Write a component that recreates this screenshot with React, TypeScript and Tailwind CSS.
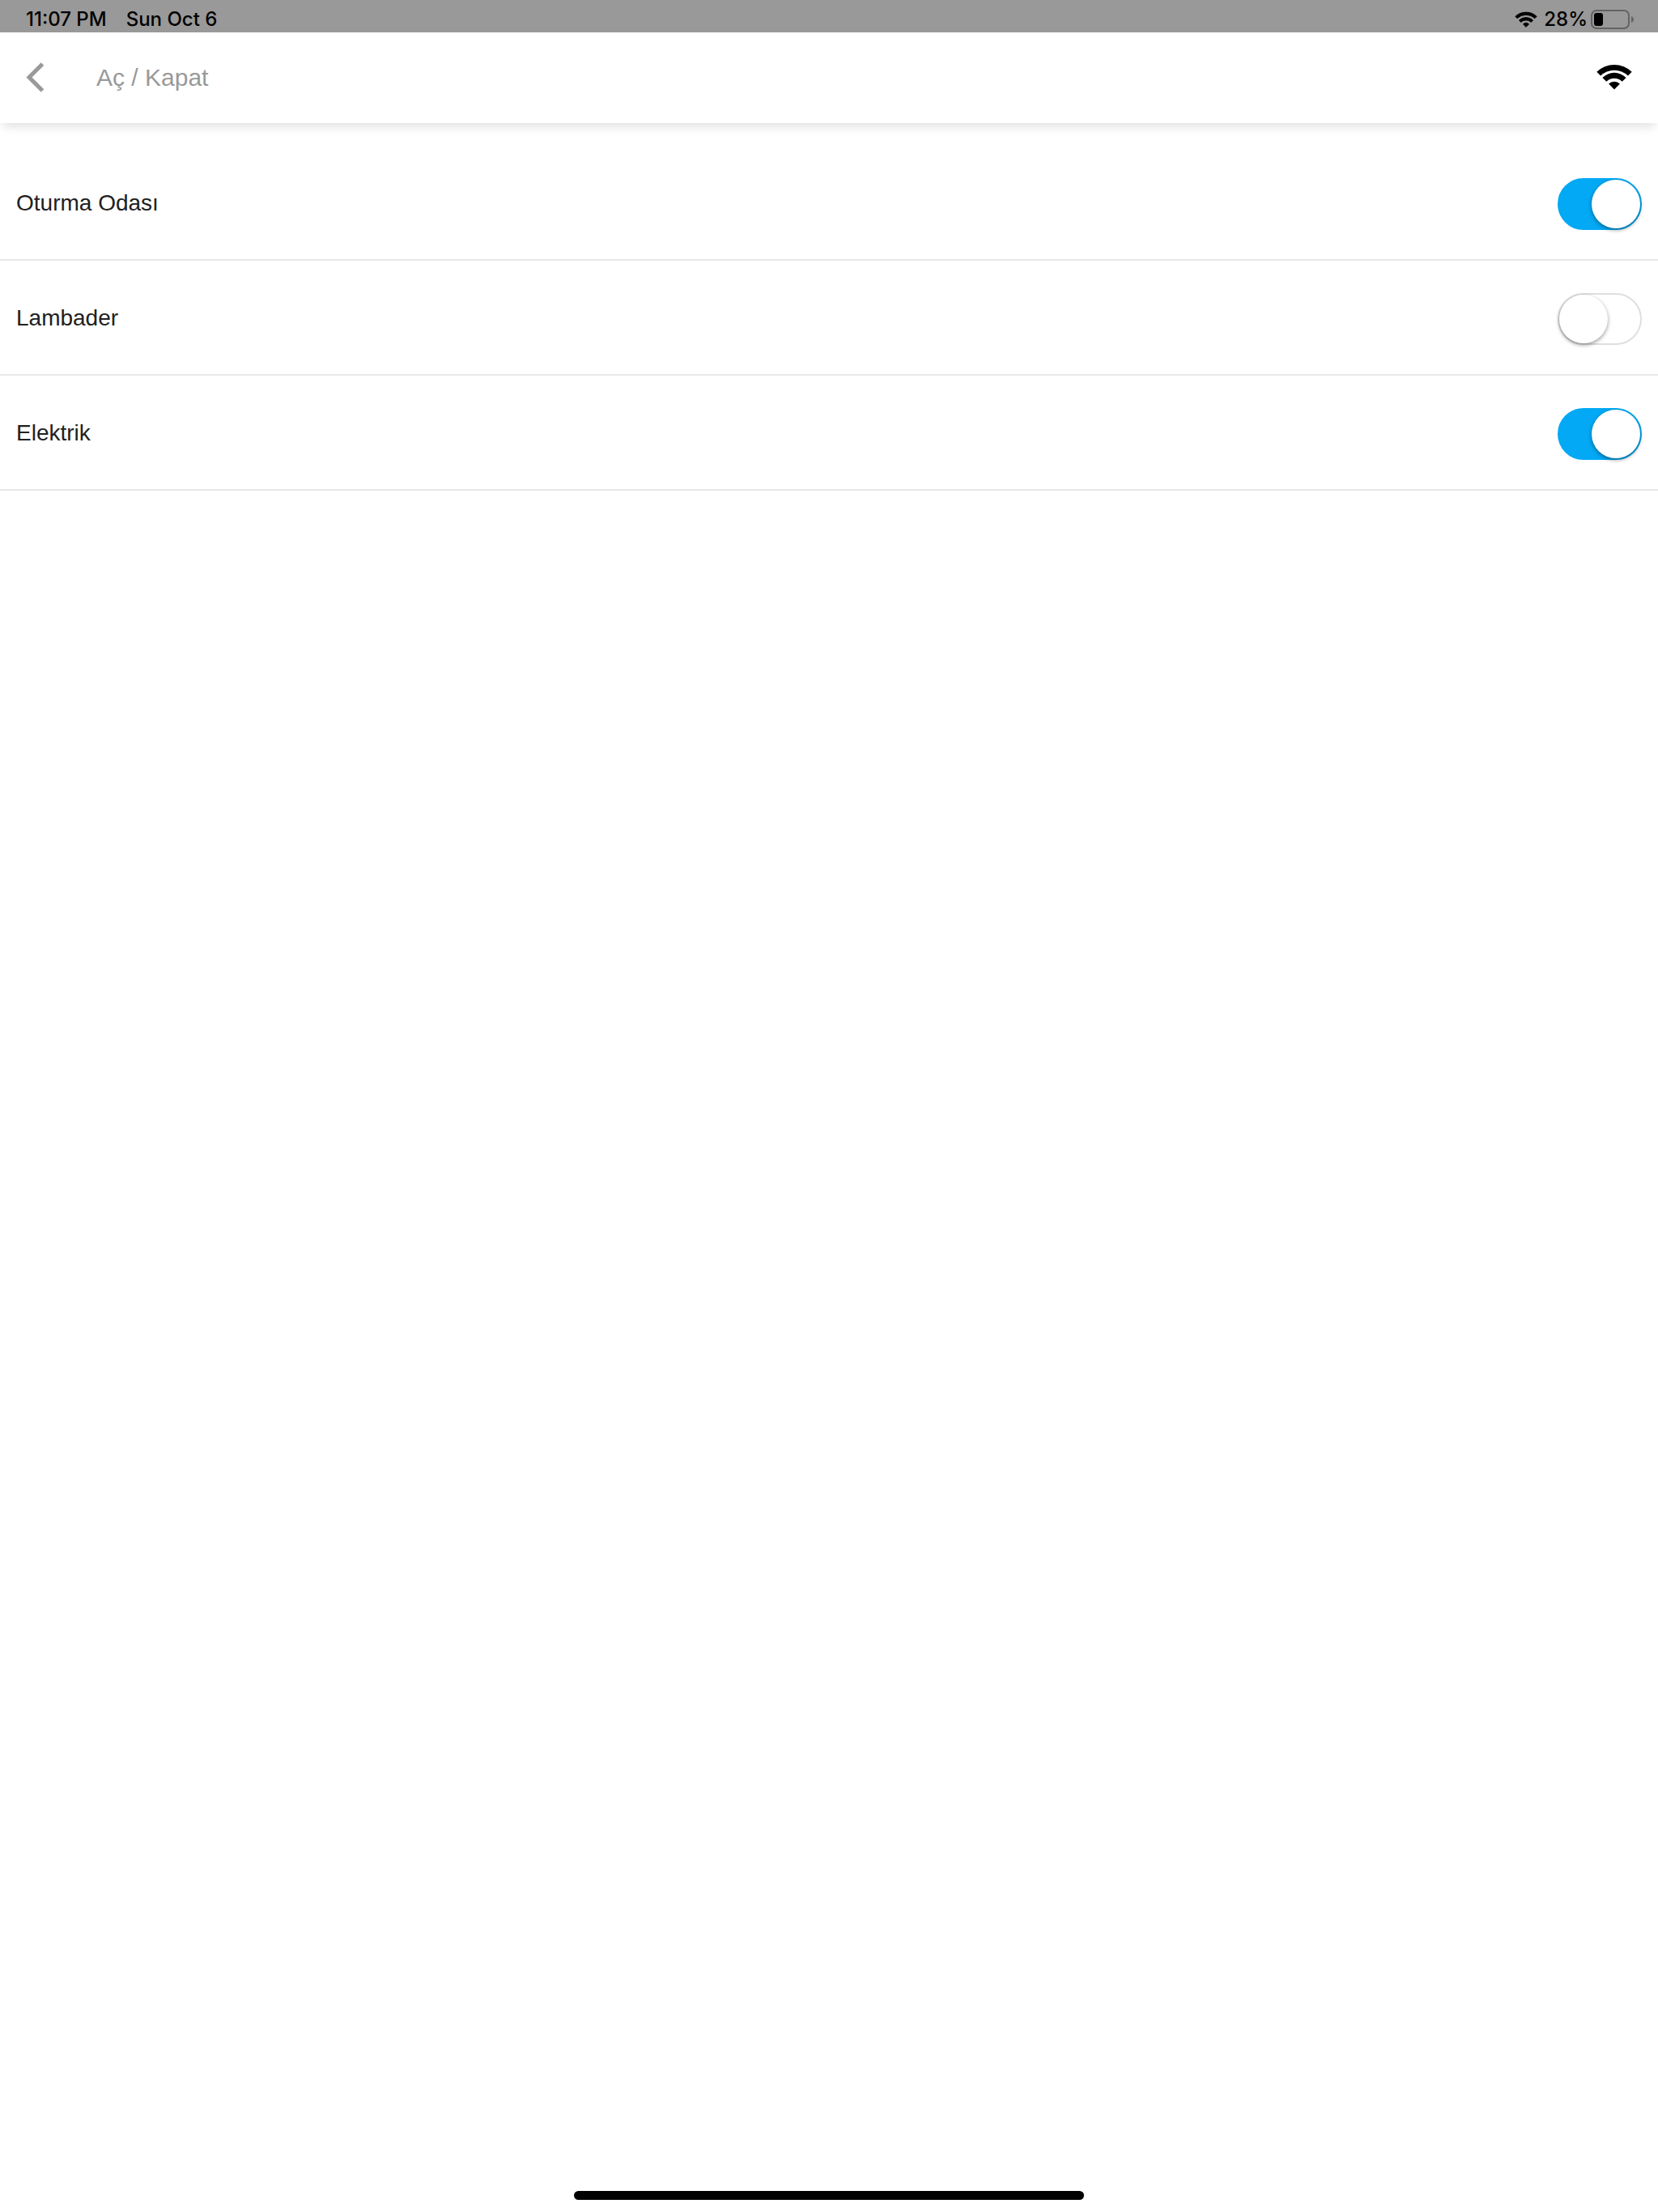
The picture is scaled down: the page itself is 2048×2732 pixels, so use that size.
import { useState } from "react";

function StatusWifi() {
  return (
    <svg width="28" height="20" viewBox="0 0 28 20" aria-hidden="true">
      <path
        d="M0.800 6.300A19.300 19.300 0 0 1 27.200 6.300L24.900 8.700A16 16 0 0 0 3.100 8.700Z"
        stroke="#000"
        strokeWidth="0.8"
        strokeLinejoin="round"
      />
      <path
        d="M5.400 11A12.500 12.500 0 0 1 22.600 11L20.300 13.400A9.200 9.200 0 0 0 7.700 13.400Z"
        stroke="#000"
        strokeWidth="0.8"
        strokeLinejoin="round"
      />
      <path
        d="M14 19.400L10.400 15.800A5.400 5.400 0 0 1 17.600 15.800Z"
        stroke="#000"
        strokeWidth="0.8"
        strokeLinejoin="round"
      />
    </svg>
  );
}

function Battery() {
  return (
    <svg width="54" height="24" viewBox="0 0 54 24" aria-hidden="true">
      <rect x="1" y="1" width="46" height="22" rx="6" fill="none" stroke="#636363" strokeWidth="2" />
      <rect x="4" y="4" width="11" height="16" rx="3" />
      <path d="M50 8C54 9.500 54 14.500 50 16Z" fill="#636363" />
    </svg>
  );
}

function HeaderWifi() {
  return (
    <svg width="44" height="34" viewBox="0 0 44 34" aria-hidden="true">
      <path d="M0.300 9.800A31 31 0 0 1 43.700 9.800L38.900 14.600A24 24 0 0 0 5.100 14.600Z" />
      <path d="M7.400 16.900A20.600 20.600 0 0 1 36.600 16.900L31.700 21.800A13.700 13.700 0 0 0 12.300 21.800Z" />
      <path d="M22 31.500L15.100 24.600A9.700 9.700 0 0 1 28.900 24.600Z" />
    </svg>
  );
}

function Row({ id, name, initial }: { id: string; name: string; initial: boolean }) {
  const [on, setOn] = useState(initial);
  return (
    <li className="flex items-start justify-between border-b-2 border-[#e8e8e8] px-5 pt-10 pb-9">
      <label htmlFor={id} className="mt-[15px] text-[28px] leading-8 text-[#212121]">
        {name}
      </label>
      <input
        id={id}
        type="checkbox"
        role="switch"
        checked={on}
        onChange={() => setOn(!on)}
        className="h-16 w-26 cursor-pointer appearance-none rounded-full border-2 border-[#dfdfdf] bg-white before:block before:size-15 before:rounded-full before:bg-white before:shadow-[0_2px_5px_rgba(0,0,0,0.4)] before:content-[''] checked:border-[#03a9f4] checked:bg-[#03a9f4] checked:before:ml-10"
      />
    </li>
  );
}

const rooms = [
  { id: "oturma", name: "Oturma Odası", initial: true },
  { id: "lambader", name: "Lambader", initial: false },
  { id: "elektrik", name: "Elektrik", initial: true },
];

export default function App() {
  return (
    <div className="flex min-h-screen flex-col bg-white font-['Liberation_Sans',Arial,sans-serif]">
      <div className="flex h-10 items-center justify-between bg-[#999] pt-2 pr-[29px] pl-8 font-['Inter',sans-serif] text-2xl font-medium text-black">
        <div className="flex gap-6">
          <span>11:07 PM</span>
          <span>Sun Oct 6</span>
        </div>
        <div className="flex items-center">
          <StatusWifi />
          <span className="mr-1 ml-2">28%</span>
          <Battery />
        </div>
      </div>
      <header className="flex h-28 items-center bg-white pr-8 pl-8 shadow-[0_8px_12px_-4px_rgba(0,0,0,0.13)]">
        <button type="button" aria-label="Geri" className="cursor-pointer">
          <svg width="24" height="38" viewBox="0 0 24 38" aria-hidden="true">
            <path d="M20.500 2L4 18.500L20.500 35" fill="none" stroke="#999" strokeWidth="5" />
          </svg>
        </button>
        <h1 className="ml-[63px] flex-1 text-[30px] leading-9 text-[#999]">Aç / Kapat</h1>
        <HeaderWifi />
      </header>
      <ul className="mt-7 flex-1">
        {rooms.map((room) => (
          <Row key={room.id} {...room} />
        ))}
      </ul>
      <div className="mx-auto mb-[15px] h-[11px] w-[630px] rounded-full bg-black" />
    </div>
  );
}
